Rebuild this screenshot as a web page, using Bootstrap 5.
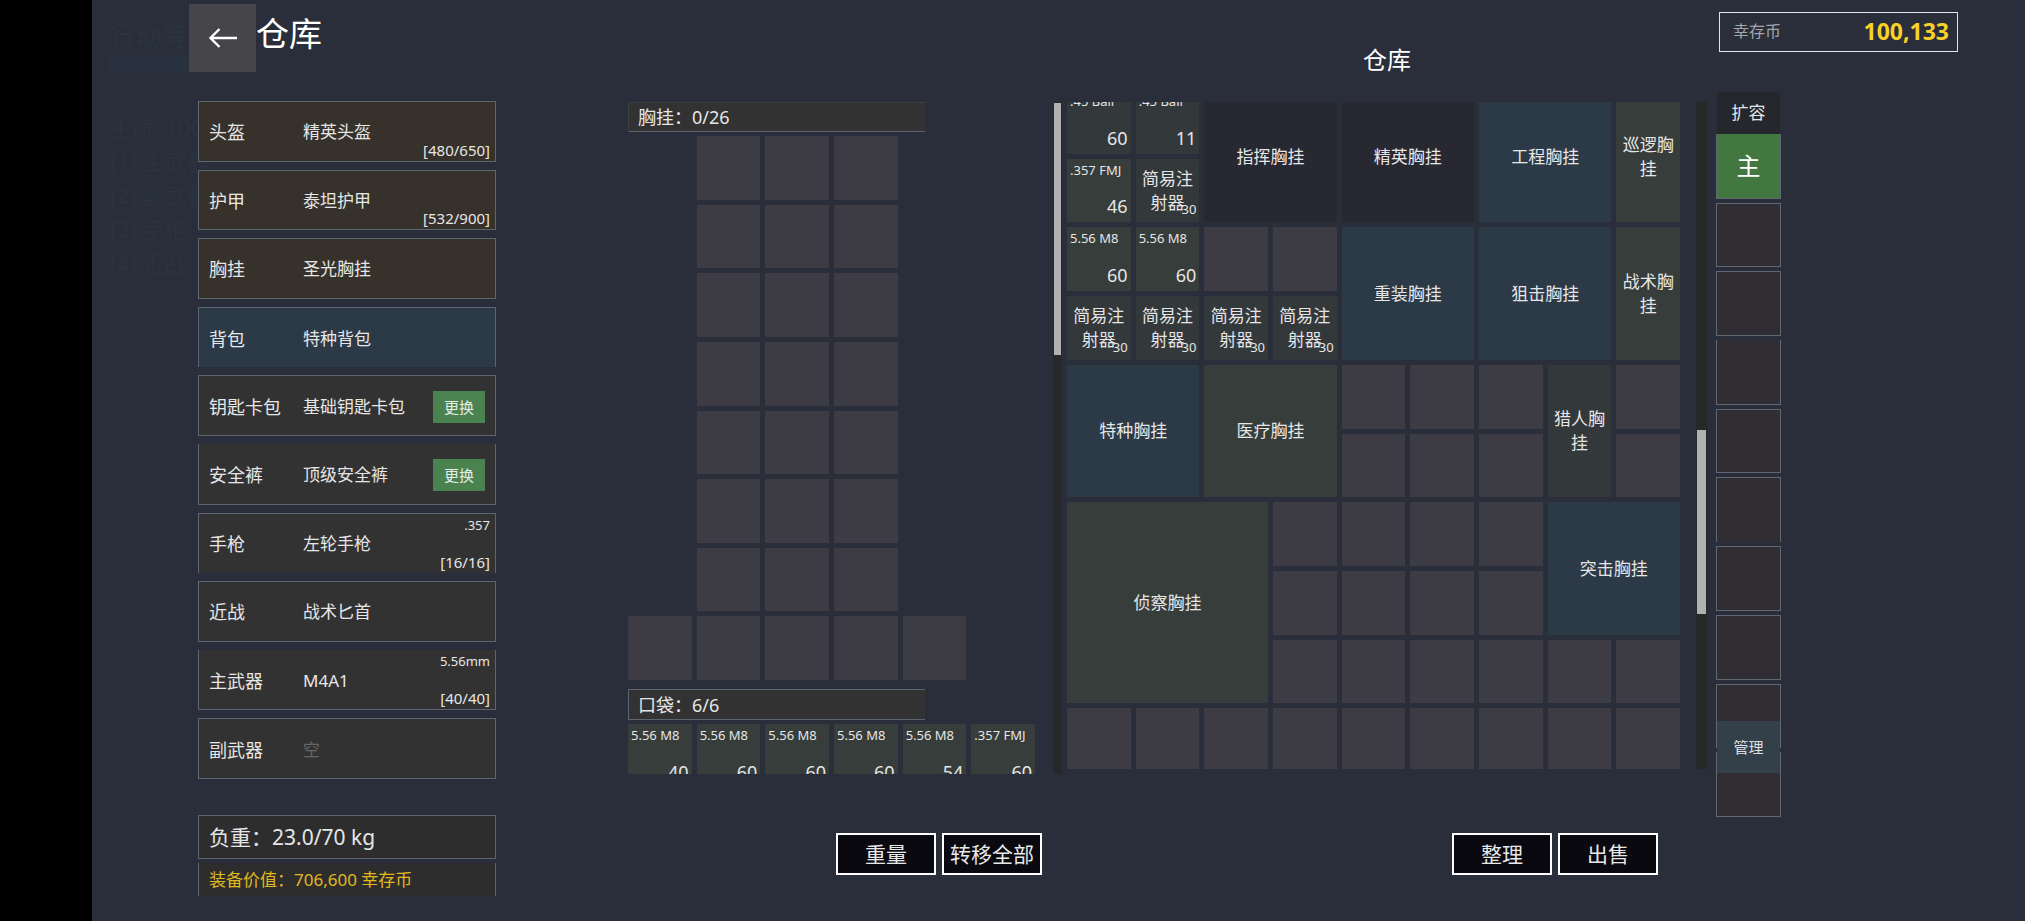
<!DOCTYPE html>
<html lang="zh-CN">
<head>
<meta charset="utf-8">
<meta name="viewport" content="width=device-width, initial-scale=1">
<title>仓库</title>
<link href="https://cdn.jsdelivr.net/npm/bootstrap@5.3.0/dist/css/bootstrap.min.css" rel="stylesheet">
<style>
  body { background: #000; color: #e6e6e6; font-family: "Noto Sans", "Noto Sans CJK SC", sans-serif; font-size: 17px; line-height: 24px; }
  .game { margin-left: 92px; background: #292e3a; }
  .game-top { display: grid; grid-template-columns: 97fr 878fr 640fr 12fr 239fr 67fr; height: 91px; }
  .game-main { display: grid; grid-template-columns: 106fr 298fr 132fr 434fr 5fr 640fr 9fr 65fr 244fr; }
  .game-main > *, .game-top > * { min-width: 0; }
  .col-gear { grid-column: 2; padding-top: 10px; }
  .col-pack { grid-column: 4; padding-top: 11px; }
  .col-stash { grid-column: 6; padding-top: 11px; }
  .col-rail { grid-column: 8; padding-top: 1px; }

  /* header */
  .btn-back { width: 67px; height: 68px; margin-top: 4px; background: #46464a; }
  .page-title { font-size: 33px; line-height: 48px; padding-top: 10px; color: #fff; }
  .stash-title { font-size: 24px; line-height: 36px; margin-top: 42px; color: #fff; }
  .coins { grid-column: 5; height: 40px; margin-top: 12px; border: 1px solid #e4e4e4; padding: 0 8px 2px 13px; }
  .coins-label { font-size: 16px; color: #a5a6a9; }
  .coins-sum { font-size: 23px; font-weight: 700; color: #f8d026; }

  /* residual status screen under the inventory */
  .underlay { left: 18px; top: 20px; color: #29343f; font-size: 22px; line-height: 34px; z-index: 0; }
  .underlay-head { font-size: 26px; line-height: 32px; }
  .underlay-bar { width: 168px; height: 17px; line-height: 17px; font-size: 16px; background: linear-gradient(90deg, #28323e 50%, transparent 50%); margin: 3px 0 38px; }
  .over { position: relative; z-index: 1; }

  /* equipment */
  .gear-list { display: grid; grid-template-rows: repeat(10, minmax(0, 1fr)); gap: 8px; aspect-ratio: 298 / 678; }
  .gear { border: 1px solid #5c6671; background: #323232; padding: 2px 0 0 10px; }
  .gear-gold { background: #36312a; }
  .gear-blue { background: #2c3946; }
  .gear-kind { width: 94px; font-size: 18px; flex: none; }
  .gear-void { color: #666; }
  .gear-cal { right: 5px; top: 2px; font-size: 13px; line-height: 18px; }
  .gear-dur { right: 5px; bottom: 1px; font-size: 15px; line-height: 20px; }
  .btn-swap { width: 52px; height: 32px; margin: 0 10px 0 auto; background: #4b8350; color: #e6ece6; font-size: 15px; line-height: 20px; }
  .sum-box { border: 1px solid #5c6671; background: #2d2d2e; padding-left: 10px; }
  .sum-load { height: 44px; margin-top: 36px; font-size: 21px; }
  .sum-worth { height: 33px; margin-top: 4px; color: #e0b91e; }

  /* inventories */
  .pane { display: flex; overflow: hidden; }
  .pane-pack { aspect-ratio: 434 / 672; }
  .pane-stash { aspect-ratio: 640 / 667; }
  .pack-body { flex: 407 1 0; min-width: 0; height: 0; }
  .stash-body { flex: 613 1 0; min-width: 0; height: 0; margin-top: -12px; }
  .track { position: relative; background: #272829; padding: 0 1px; }
  .track-pack { flex: 0 0 9px; margin-left: 18px; }
  .track-stash { flex: 0 0 11px; margin-left: 16px; }
  .thumb { position: absolute; left: 1px; right: 1px; background: #b1b1b1; }
  .pack-head { width: 73%; height: 31px; border: solid #5c6671; border-width: 1px 0 1px 1px; background: #323232; padding-left: 9px; font-size: 18px; }
  .pack-head-top { height: 30px; border-color: #3b3f45 #3b3f45 #5c6671; }
  .cells { display: grid; gap: 5px; }
  .cells-pack { grid-template-columns: repeat(6, minmax(0, 1fr)); }
  .cells-vest { grid-template-rows: repeat(8, minmax(0, 1fr)); aspect-ratio: 407 / 544; margin: 4px 0 9px; }
  .cells-vest > :nth-child(3n+1) { grid-column-start: 2; }
  .cells-vest > :nth-child(22) { grid-column-start: 1; }
  .cells-vest > :nth-child(25) { grid-column-start: 4; }
  .cells-pocket { aspect-ratio: 407 / 64; margin-top: 4px; }
  .cells-stash { grid-template-columns: repeat(9, minmax(0, 1fr)); grid-template-rows: repeat(10, minmax(0, 1fr)); aspect-ratio: 613 / 682; }
  .slot { position: relative; background: #3d3b44; display: flex; align-items: center; justify-content: center; text-align: center; min-width: 0; min-height: 0; padding: 1px 4px 0; }
  .w2 { grid-column: span 2; } .h2x { grid-row: span 2; }
  .w3 { grid-column: span 3; } .h3x { grid-row: span 3; }
  .t-green { background: #363d3b; }
  .t-blue { background: #2c3946; }
  .t-gray { background: #33383b; }
  .t-dark { background: #282833; }
  .s-name { position: absolute; left: 3px; top: 2px; font-size: 13px; line-height: 18px; white-space: nowrap; }
  .s-qty { position: absolute; right: 3px; bottom: 4px; font-size: 18px; line-height: 24px; }
  .s-use { position: absolute; right: 3px; bottom: 4px; font-size: 13px; line-height: 18px; }
  .btn-act { width: 100px; height: 42px; padding: 0; border: 2px solid #fff; border-radius: 0; background: #09090f; color: #e8e8e8; font-size: 21px; line-height: 30px; }
  .acts { gap: 6px; }
  .acts-pack { margin: 59px 20px 0 0; }
  .acts-stash { margin: 64px 49px 0 0; }

  /* page rail */
  .btn-grow { height: 42px; margin: 0 1px; background: #26262d; color: #e6e6e6; }
  .rail { display: grid; grid-template-rows: repeat(10, minmax(0, 1fr)); gap: 4px; aspect-ratio: 65 / 683; }
  .tab-cell { border: 1px solid #5f6873; background: #302e32; color: #fff; font-size: 24px; line-height: 30px; padding: 0; min-height: 0; }
  .tab-cell.on { background: #437740; border-top-color: #437740; }
  .btn-manage { left: 1px; right: 1px; top: 86%; height: 52px; background: #333f49; color: #dde0e3; font-size: 15px; }
</style>
</head>
<body>
<div class="game position-relative min-vh-100">
  <div class="underlay position-absolute" aria-hidden="true">
    <div class="underlay-head">行动等级</div>
    <div class="underlay-bar text-end">00</div>
    <div>生命&nbsp; 100</div>
    <div>[1] 主武器</div>
    <div>[2] 副武器</div>
    <div>[3] 手枪</div>
    <div>[4] 近战</div>
  </div>

  <header class="game-top over">
    <div></div>
    <div class="d-flex align-items-start">
      <button type="button" class="btn-back border-0 p-0 d-flex align-items-center justify-content-center flex-shrink-0" aria-label="返回">
        <svg width="30" height="22" viewBox="0 0 30 22" fill="none" stroke="#fff" stroke-width="2.4"><path d="M29 11H2.5M11.5 2 2.5 11l9 9"/></svg>
      </button>
      <h1 class="page-title mb-0 fw-normal">仓库</h1>
    </div>
    <h2 class="stash-title mb-0 fw-normal text-center">仓库</h2>
    <div class="coins d-flex align-items-center justify-content-between">
      <span class="coins-label">幸存币</span><span class="coins-sum">100,133</span>
    </div>
  </header>

  <main class="game-main over">
    <section class="col-gear">
      <div class="gear-list">
        <div class="gear gear-gold position-relative d-flex align-items-center"><span class="gear-kind">头盔</span><span>精英头盔</span><span class="gear-dur position-absolute">[480/650]</span></div>
        <div class="gear gear-gold position-relative d-flex align-items-center"><span class="gear-kind">护甲</span><span>泰坦护甲</span><span class="gear-dur position-absolute">[532/900]</span></div>
        <div class="gear gear-gold d-flex align-items-center"><span class="gear-kind">胸挂</span><span>圣光胸挂</span></div>
        <div class="gear gear-blue border-bottom-0 d-flex align-items-center"><span class="gear-kind">背包</span><span>特种背包</span></div>
        <div class="gear d-flex align-items-center"><span class="gear-kind">钥匙卡包</span><span>基础钥匙卡包</span><button type="button" class="btn-swap border-0 p-0">更换</button></div>
        <div class="gear border-top-0 d-flex align-items-center"><span class="gear-kind">安全裤</span><span>顶级安全裤</span><button type="button" class="btn-swap border-0 p-0">更换</button></div>
        <div class="gear border-bottom-0 position-relative d-flex align-items-center"><span class="gear-kind">手枪</span><span>左轮手枪</span><span class="gear-cal position-absolute">.357</span><span class="gear-dur position-absolute">[16/16]</span></div>
        <div class="gear d-flex align-items-center"><span class="gear-kind">近战</span><span>战术匕首</span></div>
        <div class="gear border-top-0 position-relative d-flex align-items-center"><span class="gear-kind">主武器</span><span>M4A1</span><span class="gear-cal position-absolute">5.56mm</span><span class="gear-dur position-absolute">[40/40]</span></div>
        <div class="gear d-flex align-items-center"><span class="gear-kind">副武器</span><span class="gear-void">空</span></div>
      </div>
      <div class="sum-box sum-load d-flex align-items-center">负重：23.0/70 kg</div>
      <div class="sum-box sum-worth border-top-0 border-bottom-0 d-flex align-items-center">装备价值：706,600 幸存币</div>
    </section>

    <section class="col-pack">
      <div class="pane pane-pack">
        <div class="pack-body">
          <div class="pack-head pack-head-top d-flex align-items-center">胸挂：0/26</div>
          <div class="cells cells-pack cells-vest">
            <div class="slot"></div><div class="slot"></div><div class="slot"></div>
            <div class="slot"></div><div class="slot"></div><div class="slot"></div>
            <div class="slot"></div><div class="slot"></div><div class="slot"></div>
            <div class="slot"></div><div class="slot"></div><div class="slot"></div>
            <div class="slot"></div><div class="slot"></div><div class="slot"></div>
            <div class="slot"></div><div class="slot"></div><div class="slot"></div>
            <div class="slot"></div><div class="slot"></div><div class="slot"></div>
            <div class="slot"></div><div class="slot"></div><div class="slot"></div><div class="slot"></div><div class="slot"></div>
          </div>
          <div class="pack-head d-flex align-items-center">口袋：6/6</div>
          <div class="cells cells-pack cells-pocket">
            <div class="slot t-green"><span class="s-name">5.56 M8</span><span class="s-qty">40</span></div>
            <div class="slot t-green"><span class="s-name">5.56 M8</span><span class="s-qty">60</span></div>
            <div class="slot t-green"><span class="s-name">5.56 M8</span><span class="s-qty">60</span></div>
            <div class="slot t-green"><span class="s-name">5.56 M8</span><span class="s-qty">60</span></div>
            <div class="slot t-green"><span class="s-name">5.56 M8</span><span class="s-qty">54</span></div>
            <div class="slot t-green"><span class="s-name">.357 FMJ</span><span class="s-qty">60</span></div>
          </div>
        </div>
        <div class="track track-pack"><div class="thumb" style="top:0.2%;height:37.5%"></div></div>
      </div>
      <div class="acts acts-pack d-flex justify-content-end">
        <button type="button" class="btn-act">重量</button>
        <button type="button" class="btn-act">转移全部</button>
      </div>
    </section>

    <section class="col-stash">
      <div class="pane pane-stash">
        <div class="stash-body">
          <div class="cells cells-stash">
            <div class="slot t-gray"><span class="s-name">.45 Ball</span><span class="s-qty">60</span></div>
            <div class="slot t-gray"><span class="s-name">.45 Ball</span><span class="s-qty">11</span></div>
            <div class="slot t-dark w2 h2x">指挥胸挂</div>
            <div class="slot t-dark w2 h2x">精英胸挂</div>
            <div class="slot t-blue w2 h2x">工程胸挂</div>
            <div class="slot t-green h2x">巡逻胸挂</div>
            <div class="slot t-green"><span class="s-name">.357 FMJ</span><span class="s-qty">46</span></div>
            <div class="slot t-gray">简易注射器<span class="s-use">30</span></div>

            <div class="slot t-green"><span class="s-name">5.56 M8</span><span class="s-qty">60</span></div>
            <div class="slot t-green"><span class="s-name">5.56 M8</span><span class="s-qty">60</span></div>
            <div class="slot"></div><div class="slot"></div>
            <div class="slot t-blue w2 h2x">重装胸挂</div>
            <div class="slot t-blue w2 h2x">狙击胸挂</div>
            <div class="slot t-green h2x">战术胸挂</div>
            <div class="slot t-gray">简易注射器<span class="s-use">30</span></div>
            <div class="slot t-gray">简易注射器<span class="s-use">30</span></div>
            <div class="slot t-gray">简易注射器<span class="s-use">30</span></div>
            <div class="slot t-gray">简易注射器<span class="s-use">30</span></div>

            <div class="slot t-blue w2 h2x">特种胸挂</div>
            <div class="slot t-green w2 h2x">医疗胸挂</div>
            <div class="slot"></div><div class="slot"></div><div class="slot"></div>
            <div class="slot t-gray h2x">猎人胸挂</div>
            <div class="slot"></div>
            <div class="slot"></div><div class="slot"></div><div class="slot"></div><div class="slot"></div>

            <div class="slot t-green w3 h3x">侦察胸挂</div>
            <div class="slot"></div><div class="slot"></div><div class="slot"></div><div class="slot"></div>
            <div class="slot t-blue w2 h2x">突击胸挂</div>
            <div class="slot"></div><div class="slot"></div><div class="slot"></div><div class="slot"></div>
            <div class="slot"></div><div class="slot"></div><div class="slot"></div><div class="slot"></div><div class="slot"></div><div class="slot"></div>
            <div class="slot"></div><div class="slot"></div><div class="slot"></div><div class="slot"></div><div class="slot"></div><div class="slot"></div><div class="slot"></div><div class="slot"></div><div class="slot"></div>
          </div>
        </div>
        <div class="track track-stash"><div class="thumb" style="top:49.2%;height:27.6%"></div></div>
      </div>
      <div class="acts acts-stash d-flex justify-content-end">
        <button type="button" class="btn-act">整理</button>
        <button type="button" class="btn-act">出售</button>
      </div>
    </section>

    <nav class="col-rail d-flex flex-column">
      <button type="button" class="btn-grow border-0 p-0">扩容</button>
      <div class="rail position-relative">
        <button type="button" class="tab-cell on">主</button>
        <button type="button" class="tab-cell" aria-label="第2页"></button>
        <button type="button" class="tab-cell" aria-label="第3页"></button>
        <button type="button" class="tab-cell border-top-0" aria-label="第4页"></button>
        <button type="button" class="tab-cell" aria-label="第5页"></button>
        <button type="button" class="tab-cell border-bottom-0" aria-label="第6页"></button>
        <button type="button" class="tab-cell" aria-label="第7页"></button>
        <button type="button" class="tab-cell" aria-label="第8页"></button>
        <button type="button" class="tab-cell border-bottom-0" aria-label="第9页"></button>
        <button type="button" class="tab-cell border-top-0" aria-label="第10页"></button>
        <button type="button" class="btn-manage position-absolute border-0 p-0">管理</button>
      </div>
    </nav>
  </main>
</div>
<script src="https://cdn.jsdelivr.net/npm/bootstrap@5.3.0/dist/js/bootstrap.bundle.min.js"></script>
</body>
</html>
